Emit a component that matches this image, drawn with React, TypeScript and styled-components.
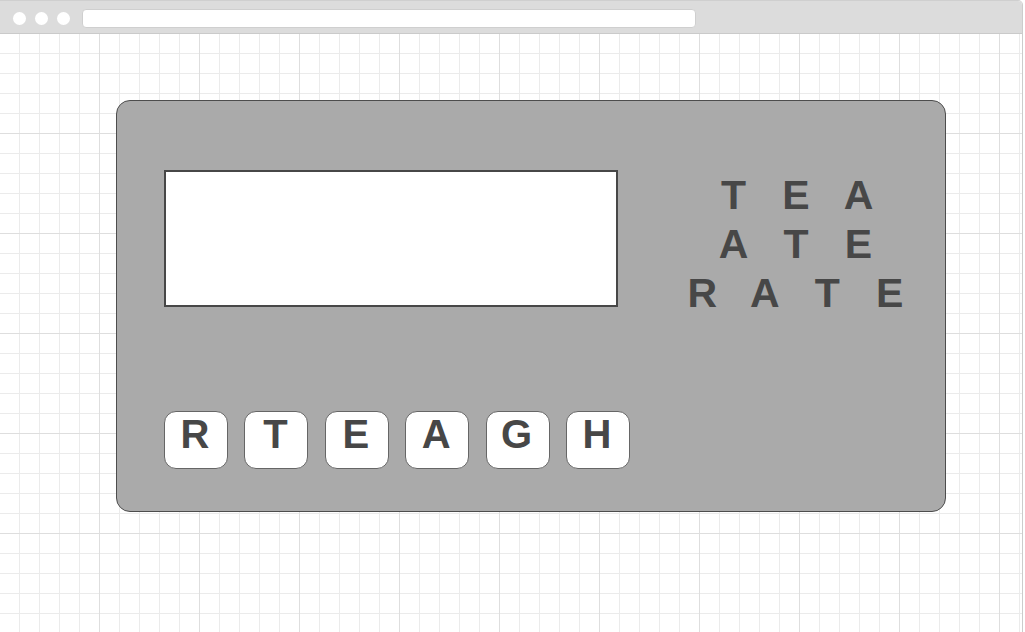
import styled, { createGlobalStyle } from "styled-components";

const WORDS = [
  ["T", "E", "A"],
  ["A", "T", "E"],
  ["R", "A", "T", "E"],
];

const TILES = ["R", "T", "E", "A", "G", "H"];

export default function App() {
  return (
    <>
      <GlobalStyle />
      <Window>
        <TitleBar>
          <Dots>
            <Dot />
            <Dot />
            <Dot />
          </Dots>
          <UrlBar />
        </TitleBar>
        <Canvas>
          <Panel>
            <LeftColumn>
              <AnswerBox />
              <TileRow>
                {TILES.map((letter, i) => (
                  <Tile key={i}>{letter}</Tile>
                ))}
              </TileRow>
            </LeftColumn>
            <WordList>
              {WORDS.map((word, i) => (
                <WordRow key={i}>
                  {word.map((letter, j) => (
                    <WordLetter key={j}>{letter}</WordLetter>
                  ))}
                </WordRow>
              ))}
            </WordList>
          </Panel>
        </Canvas>
      </Window>
    </>
  );
}

const GlobalStyle = createGlobalStyle`
  html, body {
    margin: 0;
    padding: 0;
    background: #ffffff;
    font-family: "Liberation Sans", Arial, sans-serif;
  }
  * {
    box-sizing: border-box;
  }
`;

const Window = styled.div`
  width: 1023px;
  height: 632px;
  border-top: 1px solid #cfcfcf;
  border-right: 1px solid #cccccc;
  border-top-right-radius: 5px;
  overflow: hidden;
  display: flex;
  flex-direction: column;
`;

const TitleBar = styled.div`
  height: 33px;
  flex-shrink: 0;
  background: #dcdcdc;
  border-bottom: 1px solid #cacaca;
  display: flex;
  align-items: center;
  padding: 2px 0 0 13px;
`;

const Dots = styled.div`
  display: flex;
  gap: 9px;
`;

const Dot = styled.span`
  width: 13px;
  height: 13px;
  border-radius: 50%;
  background: #ffffff;
`;

const UrlBar = styled.div`
  margin-left: 12px;
  width: 614px;
  height: 19px;
  background: #ffffff;
  border: 1px solid #cfcfcf;
  border-radius: 4px;
`;

const Canvas = styled.div`
  flex: 1;
  background-color: #ffffff;
  background-image:
    linear-gradient(to right, transparent 99px, #dedede 99px, #dedede 100px, transparent 100px),
    linear-gradient(to bottom, transparent 99px, #dedede 99px, #dedede 100px, transparent 100px),
    linear-gradient(to right, transparent 19px, #ebebeb 19px, #ebebeb 20px, transparent 20px),
    linear-gradient(to bottom, transparent 19px, #ebebeb 19px, #ebebeb 20px, transparent 20px);
  background-size: 100px 100px, 100px 100px, 20px 20px, 20px 20px;
  padding: 66px 0 0 116px;
`;

const Panel = styled.div`
  width: 830px;
  height: 412px;
  background: #aaaaaa;
  border: 1px solid #4d4d4d;
  border-radius: 14px;
  padding: 69px 0 0 47px;
  display: flex;
`;

const LeftColumn = styled.div`
  display: flex;
  flex-direction: column;
  width: 466px;
`;

const AnswerBox = styled.div`
  width: 454px;
  height: 137px;
  background: #ffffff;
  border: 2px solid #474747;
`;

const TileRow = styled.div`
  display: flex;
  gap: 16.4px;
  margin-top: 104px;
`;

const Tile = styled.div`
  width: 64px;
  height: 58px;
  background: #ffffff;
  border: 1px solid #666666;
  border-radius: 12px;
  display: flex;
  align-items: center;
  justify-content: center;
  padding: 0 2px 11px 0;
  font-size: 40px;
  font-weight: 700;
  color: #474747;
`;

const WordList = styled.div`
  margin: 1px 0 0 41px;
  width: 250px;
  display: flex;
  flex-direction: column;
`;

const WordRow = styled.div`
  display: flex;
  justify-content: center;
`;

const WordLetter = styled.span`
  width: 62.5px;
  text-align: center;
  font-size: 41px;
  line-height: 49px;
  font-weight: 700;
  color: #474747;
`;
